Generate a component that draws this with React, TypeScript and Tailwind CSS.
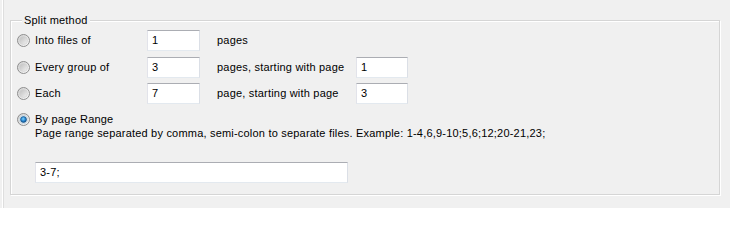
import React from "react";

function Radio({ checked }: { checked?: boolean }) {
  return (
    <svg width="13" height="13" viewBox="0 0 13 13" className="shrink-0">
      <defs>
        <linearGradient id="rOuter" x1="0" y1="0" x2="1" y2="1">
          <stop offset="0" stopColor="#cfcfcf" />
          <stop offset="1" stopColor="#fbfbfb" />
        </linearGradient>
        <linearGradient id="rInner" x1="0" y1="0" x2="1" y2="1">
          <stop offset="0" stopColor="#bdbdbd" />
          <stop offset="1" stopColor="#f2f2f2" />
        </linearGradient>
        <radialGradient id="rDot" cx="0.45" cy="0.4" r="0.6">
          <stop offset="0" stopColor="#7fd2fb" />
          <stop offset="0.55" stopColor="#2a8ad4" />
          <stop offset="1" stopColor="#0d4f8e" />
        </radialGradient>
      </defs>
      <circle cx="6.5" cy="6.5" r="6" fill="url(#rOuter)" stroke="#8e8e8e" strokeWidth="1" />
      {checked ? (
        <>
          <circle cx="6.5" cy="6.5" r="4.2" fill="#eaf4fb" stroke="#b9c7d3" strokeWidth="0.6" />
          <circle cx="6.5" cy="6.5" r="3" fill="url(#rDot)" stroke="#164d7d" strokeWidth="0.6" />
        </>
      ) : (
        <circle cx="6.5" cy="6.5" r="4" fill="url(#rInner)" stroke="#d0d0d0" strokeWidth="0.6" />
      )}
    </svg>
  );
}

function Box({ value, w }: { value: string; w: string }) {
  return (
    <div
      className={`${w} h-[21px] bg-white border border-[#e3e9ef] border-t-[#abadb3] border-l-[#e2e3ea] border-r-[#dbdfe6] flex items-center pl-[4px] text-[11px] leading-[13px] text-black`}
    >
      {value}
    </div>
  );
}

export default function App() {
  return (
    <div
      className="w-[730px] h-[208px] bg-[#f0f0f0] relative overflow-hidden text-[11px] leading-[13px] tracking-[0.2px] text-black"
      style={{ fontFamily: '"Liberation Sans", Arial, sans-serif' }}
    >
      <div className="absolute left-[2px] top-0 bottom-0 w-[1px] bg-white" />
      <div className="absolute left-[3px] top-0 bottom-0 w-[1px] bg-[#dedede]" />
      <div className="pt-[14px] pl-[10px] pr-[10px]">
        <fieldset className="border border-[#d5d5d5] shadow-[inset_1px_1px_0_#ffffff,1px_1px_0_#ffffff] pl-[6px] pt-[3px] pb-[11px]">
          <legend className="ml-[5px] px-[2px] bg-[#f0f0f0] leading-[13px]">Split method</legend>

          <div className="flex items-center h-[21px]">
            <Radio />
            <span className="ml-[5px] w-[112px]">Into files of</span>
            <Box value="1" w="w-[53px]" />
            <span className="ml-[17px]">pages</span>
          </div>

          <div className="flex items-center h-[21px] mt-[6px]">
            <Radio />
            <span className="ml-[5px] w-[112px]">Every group of</span>
            <Box value="3" w="w-[53px]" />
            <span className="ml-[17px] w-[139px]">pages, starting with page</span>
            <Box value="1" w="w-[52px]" />
          </div>

          <div className="flex items-center h-[21px] mt-[5px]">
            <Radio />
            <span className="ml-[5px] w-[112px]">Each</span>
            <Box value="7" w="w-[53px]" />
            <span className="ml-[17px] w-[139px]">page, starting with page</span>
            <Box value="3" w="w-[52px]" />
          </div>

          <div className="mt-[8px] flex">
            <div className="h-[14px] flex items-center">
              <Radio checked />
            </div>
            <div className="ml-[5px] leading-[14px]">
              <div>By page Range</div>
              <div>
                Page range separated by comma, semi-colon to separate files. Example: 1-4,6,9-10;5,6;12;20-21,23;
              </div>
            </div>
          </div>

          <div className="mt-[22px] pl-[18px]">
            <Box value="3-7;" w="w-[313px]" />
          </div>
        </fieldset>
      </div>
    </div>
  );
}
